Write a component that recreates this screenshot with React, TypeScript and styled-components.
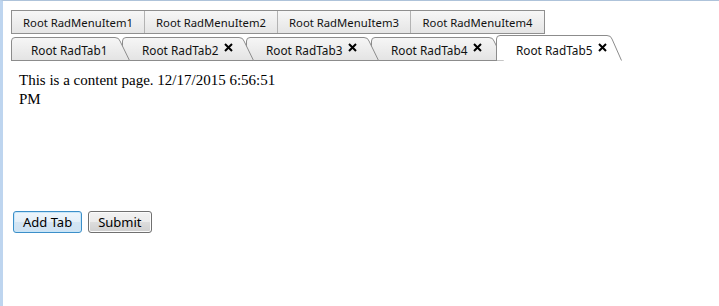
import React from 'react';
import styled, { createGlobalStyle } from 'styled-components';

const GlobalStyle = createGlobalStyle`
  html, body {
    margin: 0;
    padding: 0;
    background: #ffffff;
  }
`;

const Frame = styled.div`
  box-sizing: border-box;
  width: 719px;
  height: 306px;
  border-left: 3px solid #bed5ef;
  border-top: 1px solid #aec3da;
  padding: 9px 0 0 8px;
  font-family: "Noto Sans", "Open Sans", sans-serif;
`;

const MenuBar = styled.ul`
  display: flex;
  margin: 0;
  padding: 0;
  list-style: none;
  width: max-content;
  border: 1px solid #8f8f8f;
  height: 22px;
`;

const MenuItem = styled.li<{ $last?: boolean }>`
  box-sizing: border-box;
  width: 133px;
  display: flex;
  align-items: center;
  justify-content: center;
  font-size: 11.3px;
  color: #111;
  background: linear-gradient(#f7f7f7, #e5e5e5);
  border-right: ${(p) => (p.$last ? 'none' : '1px solid #b3b3b3')};
`;

const TabStrip = styled.div`
  display: flex;
  align-items: flex-end;
  height: 26px;
  margin-top: 1px;
`;

const Tab = styled.div<{ $selected?: boolean; $z: number; $first?: boolean }>`
  position: relative;
  box-sizing: border-box;
  height: ${(p) => (p.$selected ? 26 : 24)}px;
  margin-left: ${(p) => (p.$first ? 0 : -8)}px;
  padding: ${(p) => (p.$selected ? 3 : 1)}px 0 0 20px;
  display: flex;
  align-items: center;
  font-size: 11.8px;
  color: #111;
  z-index: ${(p) => p.$z};
`;

const TabShape = styled.svg`
  position: absolute;
  left: 0;
  top: 0;
  z-index: -1;
`;

const TabLabel = styled.span`
  white-space: nowrap;
`;

const CloseIcon = styled.svg`
  margin-left: 6px;
  margin-top: -5px;
  flex: none;
`;

const Content = styled.div`
  height: 140px;
  padding: 10px 0 0 8px;
  width: 270px;
  font-family: "Liberation Serif", "Times New Roman", serif;
  font-size: 15px;
  line-height: 19px;
  color: #000;
`;

const Buttons = styled.div`
  display: flex;
  gap: 6px;
  padding-left: 2px;
`;

const Button = styled.button<{ $focused?: boolean }>`
  box-sizing: border-box;
  height: 22px;
  padding: 0 9px;
  font-family: "Noto Sans", "Open Sans", sans-serif;
  font-size: 13px;
  color: #000;
  border-radius: 3px;
  border: 1px solid ${(p) => (p.$focused ? '#3c8fc9' : '#707070')};
  background: ${(p) =>
    p.$focused
      ? 'linear-gradient(#eef6fc 0%, #e4eff8 50%, #d4e5f3 51%, #cfe2f2 100%)'
      : 'linear-gradient(#f2f2f2 0%, #ebebeb 50%, #dddddd 51%, #cfcfcf 100%)'};
  box-shadow: inset 0 0 0 1px ${(p) => (p.$focused ? '#c9e6f8' : '#fbfbfb')};
`;

const tabs = [
  { label: 'Root RadTab1', width: 119, close: false },
  { label: 'Root RadTab2', width: 132, close: true },
  { label: 'Root RadTab3', width: 133, close: true },
  { label: 'Root RadTab4', width: 133, close: true },
  { label: 'Root RadTab5', width: 126, close: true, selected: true },
];

const shapePath = (w: number, h: number, closed: boolean) => {
  const outline = `M0.5,${h} L0.5,4 Q0.5,0.5 4,0.5 L${w - 15},0.5 Q${w - 11},0.5 ${w - 10},4 L${w - 0.5},${h - 0.5}`;
  return closed ? `${outline} L0.5,${h - 0.5}` : outline;
};

const TabBackground = ({ w, h, selected, id }: { w: number; h: number; selected?: boolean; id: string }) => (
  <TabShape width={w} height={h} viewBox={`0 0 ${w} ${h}`}>
    <defs>
      <linearGradient id={id} x1="0" y1="0" x2="0" y2="1">
        <stop offset="0" stopColor={selected ? '#ffffff' : '#f6f6f6'} />
        <stop offset="1" stopColor={selected ? '#ffffff' : '#e3e3e3'} />
      </linearGradient>
    </defs>
    <path d={shapePath(w, h, true) + ' Z'} fill={`url(#${id})`} stroke="none" />
    <path d={shapePath(w, h, !selected)} fill="none" stroke="#8c8c8c" strokeWidth="1" />
  </TabShape>
);

const Close = () => (
  <CloseIcon width="9" height="9" viewBox="0 0 9 9">
    <path d="M1,1 L8,8 M8,1 L1,8" stroke="#000" strokeWidth="2" />
  </CloseIcon>
);

export default function App() {
  return (
    <Frame>
      <GlobalStyle />
      <MenuBar>
        {[1, 2, 3, 4].map((n) => (
          <MenuItem key={n} $last={n === 4}>
            Root RadMenuItem{n}
          </MenuItem>
        ))}
      </MenuBar>
      <TabStrip>
        {tabs.map((t, i) => {
          const h = t.selected ? 26 : 24;
          return (
            <Tab key={t.label} $first={i === 0} $selected={t.selected} $z={t.selected ? 20 : 10 - i} style={{ width: t.width }}>
              <TabBackground w={t.width} h={h} selected={t.selected} id={`tabgrad${i}`} />
              <TabLabel>{t.label}</TabLabel>
              {t.close && <Close />}
            </Tab>
          );
        })}
      </TabStrip>
      <Content>This is a content page. 12/17/2015 6:56:51 PM</Content>
      <Buttons>
        <Button $focused>Add Tab</Button>
        <Button>Submit</Button>
      </Buttons>
    </Frame>
  );
}
